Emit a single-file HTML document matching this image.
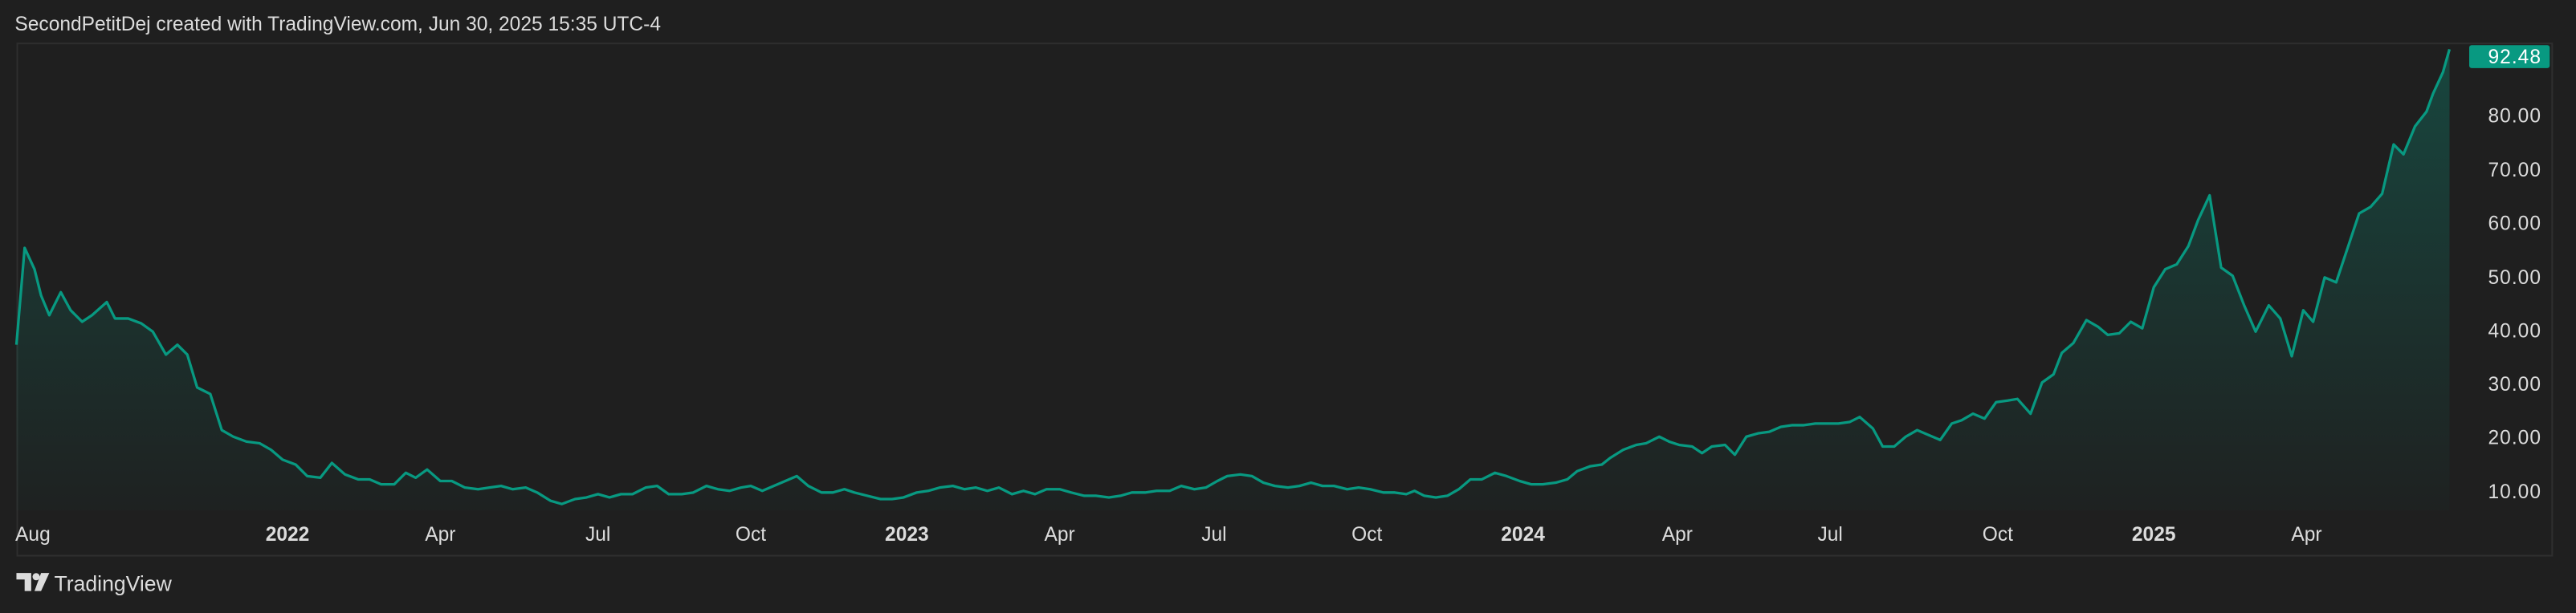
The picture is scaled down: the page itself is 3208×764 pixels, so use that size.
<!DOCTYPE html>
<html><head><meta charset="utf-8"><style>
html,body{margin:0;padding:0;background:#1f1f1f;width:3208px;height:764px;overflow:hidden}
svg{display:block}
text{font-family:"Liberation Sans",sans-serif}
</style></head><body>
<svg width="3208" height="764" viewBox="0 0 1568 373.4" preserveAspectRatio="none" xmlns="http://www.w3.org/2000/svg">
<defs><linearGradient id="g" x1="0" y1="0" x2="0" y2="1">
<stop offset="0" stop-color="#089981" stop-opacity="0.32"/><stop offset="1" stop-color="#089981" stop-opacity="0.02"/></linearGradient></defs>
<rect width="1568" height="373.4" fill="#1f1f1f"/>
<text x="9" y="18.5" font-size="12" fill="#dcdcdc">SecondPetitDej created with TradingView.com, Jun 30, 2025 15:35 UTC-4</text>
<rect x="10.5" y="26.5" width="1543" height="312" fill="none" stroke="#2e2e2e" stroke-width="1"/>
<polygon fill="url(#g)" points="10,210 15,151 21,164 25,180 30,192 37,178 43,189 50,196 56,192 65,184 70,194 78,194 86,197 93,202 101,216 108,210 114,216 120,236 128,240 135,262 142,266 150,269 158,270 165,274 172,280 180,283 187,290 195,291 202,282 210,289 218,292 225,292 232,295 240,295 247,288 253,291 260,286 268,293 275,293 283,297 291,298 298,297 305,296 312,298 320,297 327,300 335,305 342,307 350,304 357,303 364,301 371,303 378,301 385,301 393,297 400,296 407,301 415,301 422,300 430,296 437,298 444,299 451,297 457,296 464,299 471,296 478,293 485,290 492,296 500,300 507,300 514,298 520,300 528,302 536,304 543,304 550,303 558,300 565,299 572,297 580,296 587,298 594,297 601,299 608,297 616,301 623,299 630,301 637,298 645,298 652,300 660,302 667,302 675,303 682,302 689,300 697,300 704,299 712,299 719,296 727,298 734,297 741,293 747,290 755,289 762,290 769,294 776,296 784,297 791,296 798,294 805,296 812,296 820,298 827,297 834,298 842,300 849,300 856,301 861,299 867,302 874,303 881,302 888,298 895,292 902,292 910,288 917,290 925,293 932,295 939,295 947,294 954,292 960,287 968,284 975,283 980,279 988,274 996,271 1002,270 1010,266 1016,269 1022,271 1030,272 1036,276 1042,272 1050,271 1056,277 1063,266 1070,264 1077,263 1084,260 1091,259 1098,259 1105,258 1112,258 1119,258 1126,257 1132,254 1140,261 1146,272 1153,272 1160,266 1167,262 1174,265 1181,268 1188,258 1194,256 1201,252 1208,255 1215,245 1222,244 1228,243 1236,252 1243,233 1250,228 1255,215 1262,209 1270,195 1277,199 1283,204 1290,203 1297,196 1304,200 1311,175 1318,164 1325,161 1332,150 1338,134 1345,119 1352,163 1359,168 1366,186 1373,202 1381,186 1388,194 1395,217 1402,189 1408,196 1415,169 1422,172 1429,151 1436,130 1443,126 1450,118 1457,88 1463,94 1470,77 1477,68 1481,57 1487,44 1491,30 1491,311 10,311"/>
<polyline fill="none" stroke="#089981" stroke-width="1.6" stroke-linejoin="round" points="10,210 15,151 21,164 25,180 30,192 37,178 43,189 50,196 56,192 65,184 70,194 78,194 86,197 93,202 101,216 108,210 114,216 120,236 128,240 135,262 142,266 150,269 158,270 165,274 172,280 180,283 187,290 195,291 202,282 210,289 218,292 225,292 232,295 240,295 247,288 253,291 260,286 268,293 275,293 283,297 291,298 298,297 305,296 312,298 320,297 327,300 335,305 342,307 350,304 357,303 364,301 371,303 378,301 385,301 393,297 400,296 407,301 415,301 422,300 430,296 437,298 444,299 451,297 457,296 464,299 471,296 478,293 485,290 492,296 500,300 507,300 514,298 520,300 528,302 536,304 543,304 550,303 558,300 565,299 572,297 580,296 587,298 594,297 601,299 608,297 616,301 623,299 630,301 637,298 645,298 652,300 660,302 667,302 675,303 682,302 689,300 697,300 704,299 712,299 719,296 727,298 734,297 741,293 747,290 755,289 762,290 769,294 776,296 784,297 791,296 798,294 805,296 812,296 820,298 827,297 834,298 842,300 849,300 856,301 861,299 867,302 874,303 881,302 888,298 895,292 902,292 910,288 917,290 925,293 932,295 939,295 947,294 954,292 960,287 968,284 975,283 980,279 988,274 996,271 1002,270 1010,266 1016,269 1022,271 1030,272 1036,276 1042,272 1050,271 1056,277 1063,266 1070,264 1077,263 1084,260 1091,259 1098,259 1105,258 1112,258 1119,258 1126,257 1132,254 1140,261 1146,272 1153,272 1160,266 1167,262 1174,265 1181,268 1188,258 1194,256 1201,252 1208,255 1215,245 1222,244 1228,243 1236,252 1243,233 1250,228 1255,215 1262,209 1270,195 1277,199 1283,204 1290,203 1297,196 1304,200 1311,175 1318,164 1325,161 1332,150 1338,134 1345,119 1352,163 1359,168 1366,186 1373,202 1381,186 1388,194 1395,217 1402,189 1408,196 1415,169 1422,172 1429,151 1436,130 1443,126 1450,118 1457,88 1463,94 1470,77 1477,68 1481,57 1487,44 1491,30"/>
<rect x="1503" y="27.5" width="49" height="14" rx="1.5" fill="#089981"/>
<g font-size="12" fill="#dcdcdc" text-anchor="end" letter-spacing="0.5">
<text x="1547" y="38.5" fill="#fff">92.48</text>
<text x="1547" y="74.5">80.00</text>
<text x="1547" y="107.5">70.00</text>
<text x="1547" y="140">60.00</text>
<text x="1547" y="173">50.00</text>
<text x="1547" y="205.5">40.00</text>
<text x="1547" y="238">30.00</text>
<text x="1547" y="270.5">20.00</text>
<text x="1547" y="303.5">10.00</text>
</g>
<g font-size="12" fill="#dcdcdc" text-anchor="middle">
<text x="20" y="329.5">Aug</text>
<text x="175" y="329.5" font-weight="bold">2022</text>
<text x="268" y="329.5">Apr</text>
<text x="364" y="329.5">Jul</text>
<text x="457" y="329.5">Oct</text>
<text x="552" y="329.5" font-weight="bold">2023</text>
<text x="645" y="329.5">Apr</text>
<text x="739" y="329.5">Jul</text>
<text x="832" y="329.5">Oct</text>
<text x="927" y="329.5" font-weight="bold">2024</text>
<text x="1021" y="329.5">Apr</text>
<text x="1114" y="329.5">Jul</text>
<text x="1216" y="329.5">Oct</text>
<text x="1311" y="329.5" font-weight="bold">2025</text>
<text x="1404" y="329.5">Apr</text>
</g>
<g fill="#dcdcdc">
<path d="M10 349h9v11h-4v-7h-5z"/><circle cx="22" cy="351.3" r="2.2"/><path d="M25 349h5l-5 11h-4z"/>
</g>
<text x="33" y="360" font-size="13" fill="#dcdcdc">TradingView</text>
</svg>
</body></html>
